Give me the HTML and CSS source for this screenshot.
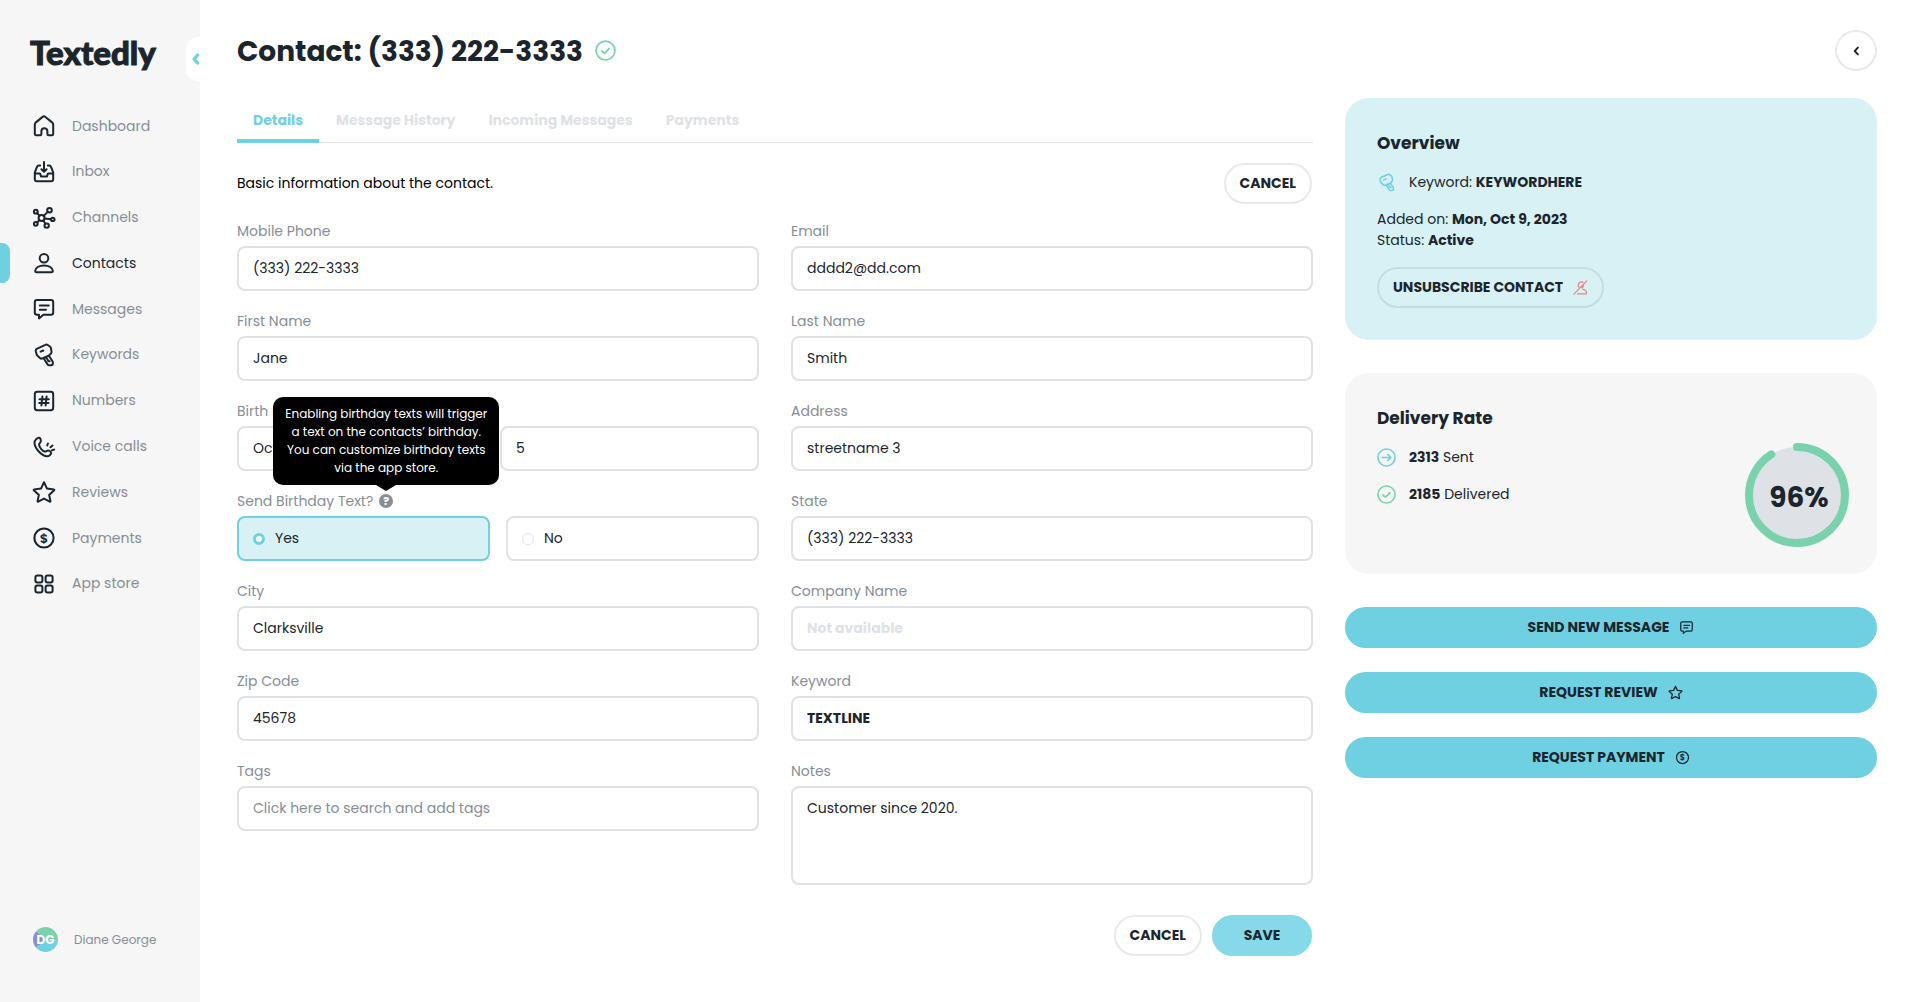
FILE: index.html
```
<!DOCTYPE html>
<html lang="en">
<head>
    <meta charset="UTF-8">
    <meta name="viewport" content="width=device-width, initial-scale=1.0">
    <title>Contact - Textedly</title>
    <link rel="stylesheet" href="styles.css">
</head>
<body>

    <!-- Icon sprite -->
    <svg class="sprite" aria-hidden="true">
        <symbol id="i-home" viewBox="0 0 24 24"><path d="M2.8 20V10.4c0-.7.3-1.3.8-1.8l7-5.7a2.2 2.2 0 0 1 2.8 0l7 5.7c.5.5.8 1.1.8 1.8V20c0 .7-.5 1.2-1.2 1.2h-3.4c-.7 0-1.2-.5-1.2-1.2v-2.8a3 3 0 0 0-6 0V20c0 .7-.5 1.2-1.2 1.2H4c-.7 0-1.2-.5-1.2-1.2z"/></symbol>
        <symbol id="i-inbox" viewBox="0 0 24 24"><path d="M8.2 5.4H6.9c-.8 0-1.5.4-1.8 1.2L2.8 12.4v6.8c0 1.1.9 2 2 2h14.4c1.1 0 2-.9 2-2v-6.8l-2.3-5.8c-.3-.8-1-1.2-1.8-1.2h-1.3M2.8 13.6h4.6c.7 0 1.2.5 1.2 1.2v.6c0 .7.5 1.2 1.2 1.2h4.4c.7 0 1.2-.5 1.2-1.2v-.6c0-.7.5-1.2 1.2-1.2h4.6M12 2v9.4M9.4 9.2l2.6 2.6 2.6-2.6"/></symbol>
        <symbol id="i-channels" viewBox="0 0 24 24"><circle cx="9.6" cy="12" r="3"/><circle cx="3.8" cy="5.7" r="1.9"/><circle cx="17.5" cy="4.2" r="2.3"/><circle cx="20.8" cy="13.4" r="1.7"/><circle cx="14.7" cy="19.6" r="2.2"/><circle cx="3.8" cy="17.8" r="1.9"/><path d="M5.2 7.1l2.2 2.6M15.8 5.9l-4.1 4M12.6 12.5l6.4.7M11.3 14.5l2.1 3.2M7.4 14l-2.2 2.4"/></symbol>
        <symbol id="i-user" viewBox="0 0 24 24"><circle cx="12" cy="7.2" r="4.3"/><path d="M12 14.4c-5 0-8.8 2.5-8.8 5.4 0 .9.6 1.5 1.5 1.5h14.6c.9 0 1.5-.6 1.5-1.5 0-2.9-3.8-5.4-8.8-5.4z"/></symbol>
        <symbol id="i-message" viewBox="0 0 24 24"><path d="M5 3h14c1.2 0 2.2 1 2.2 2.2v10.4c0 1.2-1 2.2-2.2 2.2h-7.6L7 21.4v-3.6H5c-1.2 0-2.2-1-2.2-2.2V5.2C2.8 4 3.8 3 5 3zM7.8 8.6h9M7.8 12.7h6.2"/></symbol>
        <symbol id="i-key" viewBox="0 0 24 24"><path d="M5.2 5.6l8.2-3.8c.8-.4 1.6-.3 2.3.2l2.2 1.5c.6.4 1 1 1.1 1.8l.5 3.3c.1.9-.2 1.7-.9 2.3l-1.7 1.5c-.2.2-.5.4-.8.5l-5.6 2.5c-.9.4-1.9.2-2.6-.4l-2.5-2.4c-.4-.4-.7-.9-.8-1.4L3.8 8.2c-.2-1.1.4-2.2 1.4-2.6zM11.6 15.2l4 6.2c.3.5.8.8 1.4.8h2.2c.9 0 1.6-.7 1.6-1.6v-1.8l-3.9-6M14.6 15l1.4 2.2M16.2 18l1.4.2M8.6 8.7l2.7-1.2"/></symbol>
        <symbol id="i-hash" viewBox="0 0 24 24"><rect x="2.8" y="2.8" width="18.4" height="18.4" rx="2.4"/><path d="M10.4 7.5l-1 9M14.6 7.5l-1 9M7.5 10.2h9.3M7.2 13.9h9.3"/></symbol>
        <symbol id="i-phone" viewBox="0 0 24 24"><path d="M4.2 4.2C5.3 3 6.2 2.4 7.3 2.7c1.3.4 1.8 2.8 1.4 4-.4 1.2-1.6 1.6-1.6 2.9 0 2.4 3.3 6.6 5.7 7 1.3.2 2-1 3.2-1 1.3 0 3 1.2 3.1 2.4.1 1.5-2.2 3.3-4 3.3C9.7 21.3 2.5 13 2.5 7.7c0-1.4.8-2.5 1.7-3.5zM15.3 10.5l.6-2M18.5 12.3l2-1.7M20 15.2l2.2-.6"/></symbol>
        <symbol id="i-star" viewBox="0 0 24 24"><path d="M12 2.2l3 6.4 6.9.8c.4 0 .6.5.3.8l-5.1 4.7 1.4 6.3c.1.4-.3.7-.7.5L12 18.6l-5.8 3.1c-.4.2-.8-.1-.7-.5l1.4-6.3-5.1-4.7c-.3-.3-.1-.8.3-.8l6.9-.8z"/></symbol>
        <symbol id="i-dollar" viewBox="0 0 24 24"><circle cx="12" cy="12" r="9.6"/><text class="icon-sign" x="12" y="16.6" text-anchor="middle">$</text></symbol>
        <symbol id="i-grid" viewBox="0 0 24 24"><rect x="3.4" y="3.4" width="7" height="7" rx="2"/><rect x="13.6" y="3.4" width="7" height="7" rx="2"/><rect x="3.4" y="13.6" width="7" height="7" rx="2"/><rect x="13.6" y="13.6" width="7" height="7" rx="2"/></symbol>
        <symbol id="i-check" viewBox="0 0 24 24"><circle cx="12" cy="12" r="10.8"/><path d="M7.6 12.4l3.2 2.9 5.6-5.7"/></symbol>
        <symbol id="i-arrow" viewBox="0 0 24 24"><circle cx="12" cy="12" r="10.8"/><path d="M6.5 12h11M13.6 8.3l4 3.7-4 3.7"/></symbol>
        <symbol id="i-unsub" viewBox="0 0 24 24"><path d="M16 3.8a5 5 0 1 0-5 9M16.8 7.5a5 5 0 0 1-2.5 4.7M1.5 22.5L22 1.5M15.5 14.5c3.6 1 6.2 3.3 6.2 6.2 0 .9-.6 1.5-1.5 1.5H7.5"/></symbol>
        <symbol id="i-chevron" viewBox="0 0 12 16"><path d="M9 2.5L4 8l5 5.5"/></symbol>
    </svg>

    <div class="app">

        <!-- Sidebar -->
        <aside class="sidebar">
            <a href="#" class="logo">Textedly</a>
            <button class="collapse-btn" aria-label="Collapse menu"><svg><use href="#i-chevron"/></svg></button>

            <nav>
                <ul class="nav-list">
                    <li><a href="#"><svg class="icon"><use href="#i-home"/></svg>Dashboard</a></li>
                    <li><a href="#"><svg class="icon"><use href="#i-inbox"/></svg>Inbox</a></li>
                    <li><a href="#"><svg class="icon"><use href="#i-channels"/></svg>Channels</a></li>
                    <li><a href="#" class="active"><svg class="icon"><use href="#i-user"/></svg>Contacts</a></li>
                    <li><a href="#"><svg class="icon"><use href="#i-message"/></svg>Messages</a></li>
                    <li><a href="#"><svg class="icon"><use href="#i-key"/></svg>Keywords</a></li>
                    <li><a href="#"><svg class="icon"><use href="#i-hash"/></svg>Numbers</a></li>
                    <li><a href="#"><svg class="icon"><use href="#i-phone"/></svg>Voice calls</a></li>
                    <li><a href="#"><svg class="icon"><use href="#i-star"/></svg>Reviews</a></li>
                    <li><a href="#"><svg class="icon"><use href="#i-dollar"/></svg>Payments</a></li>
                    <li><a href="#"><svg class="icon"><use href="#i-grid"/></svg>App store</a></li>
                </ul>
            </nav>

            <a href="#" class="user"><span class="avatar">DG</span>Diane George</a>
        </aside>

        <main class="main">
            <header class="page-header">
                <h1>Contact: (333) 222-3333</h1>
                <svg class="verified"><use href="#i-check"/></svg>
                <button class="back-btn" aria-label="Back"><svg><use href="#i-chevron"/></svg></button>
            </header>

            <div class="columns">
                <section class="details">
                    <nav class="tabs">
                        <a href="#" class="tab active">Details</a>
                        <a href="#" class="tab">Message History</a>
                        <a href="#" class="tab">Incoming Messages</a>
                        <a href="#" class="tab">Payments</a>
                    </nav>

                    <form>
                        <div class="form-header">
                            <p>Basic information about the contact.</p>
                            <button type="button" class="btn btn-outline">CANCEL</button>
                        </div>

                        <div class="form-grid">
                            <div class="field">
                                <label for="mobile">Mobile Phone</label>
                                <input id="mobile" type="text" value="(333) 222-3333">
                            </div>
                            <div class="field">
                                <label for="email">Email</label>
                                <input id="email" type="text" value="dddd2@dd.com">
                            </div>
                            <div class="field">
                                <label for="first">First Name</label>
                                <input id="first" type="text" value="Jane">
                            </div>
                            <div class="field">
                                <label for="last">Last Name</label>
                                <input id="last" type="text" value="Smith">
                            </div>
                            <div class="field">
                                <label for="month">Birth Date</label>
                                <div class="birth-date">
                                    <select id="month"><option>October</option></select>
                                    <select aria-label="Birth day"><option>5</option></select>
                                </div>
                            </div>
                            <div class="field">
                                <label for="address">Address</label>
                                <input id="address" type="text" value="streetname 3">
                            </div>
                            <div class="field" role="radiogroup" aria-labelledby="birthdayText">
                                <div class="label-row">
                                    <span id="birthdayText" class="label">Send Birthday Text?</span>
                                    <span class="help">?
                                        <span class="tooltip" role="tooltip">Enabling birthday texts will trigger<br>a text on the contacts’ birthday.<br>You can customize birthday texts<br>via the app store.</span>
                                    </span>
                                </div>
                                <div class="radio-group">
                                    <label class="radio checked"><input type="radio" name="birthday" checked>Yes</label>
                                    <label class="radio"><input type="radio" name="birthday">No</label>
                                </div>
                            </div>
                            <div class="field">
                                <label for="state">State</label>
                                <input id="state" type="text" value="(333) 222-3333">
                            </div>
                            <div class="field">
                                <label for="city">City</label>
                                <input id="city" type="text" value="Clarksville">
                            </div>
                            <div class="field">
                                <label for="company">Company Name</label>
                                <input id="company" type="text" class="empty" placeholder="Not available">
                            </div>
                            <div class="field">
                                <label for="zip">Zip Code</label>
                                <input id="zip" type="text" value="45678">
                            </div>
                            <div class="field">
                                <label for="keyword">Keyword</label>
                                <input id="keyword" type="text" class="strong" value="TEXTLINE">
                            </div>
                            <div class="field">
                                <label for="tags">Tags</label>
                                <input id="tags" type="text" placeholder="Click here to search and add tags">
                            </div>
                            <div class="field">
                                <label for="notes">Notes</label>
                                <textarea id="notes">Customer since 2020.</textarea>
                            </div>
                        </div>

                        <div class="form-actions">
                            <button type="button" class="btn btn-outline">CANCEL</button>
                            <button type="submit" class="btn btn-save">SAVE</button>
                        </div>
                    </form>
                </section>

                <!-- Right column -->
                <aside class="side">
                    <section class="card overview">
                        <h2>Overview</h2>
                        <p class="row"><svg class="key"><use href="#i-key"/></svg><span>Keyword: <b>KEYWORDHERE</b></span></p>
                        <p>Added on: <b>Mon, Oct 9, 2023</b><br>Status: <b>Active</b></p>
                        <button class="btn btn-unsub">UNSUBSCRIBE CONTACT <svg><use href="#i-unsub"/></svg></button>
                    </section>

                    <section class="card delivery">
                        <div class="stats">
                            <h2>Delivery Rate</h2>
                            <p class="row"><svg class="sent"><use href="#i-arrow"/></svg><span><b>2313</b> Sent</span></p>
                            <p class="row"><svg class="delivered"><use href="#i-check"/></svg><span><b>2185</b> Delivered</span></p>
                        </div>
                        <svg class="ring" viewBox="0 0 104 104">
                            <circle class="ring-bg" cx="52" cy="52" r="48"/>
                            <circle class="ring-value" cx="52" cy="52" r="48" pathLength="100" transform="rotate(-90 52 52)"/>
                            <text x="54" y="64" text-anchor="middle">96%</text>
                        </svg>
                    </section>

                    <div class="actions">
                        <button class="btn btn-primary">SEND NEW MESSAGE <svg><use href="#i-message"/></svg></button>
                        <button class="btn btn-primary">REQUEST REVIEW <svg><use href="#i-star"/></svg></button>
                        <button class="btn btn-primary">REQUEST PAYMENT <svg><use href="#i-dollar"/></svg></button>
                    </div>
                </aside>
            </div>
        </main>
    </div>

</body>
</html>
```
FILE: styles.css
```
/* Basic Reset */
* {
    margin: 0;
    padding: 0;
    box-sizing: border-box;
}

body {
    font-family: Poppins, Inter, sans-serif;
    font-size: 14px;
    line-height: 21px;
    color: #1b252e;
    background: #fff;
}

a {
    color: inherit;
    text-decoration: none;
}

button, input, select, textarea {
    font: inherit;
    color: inherit;
}

button {
    cursor: pointer;
}

svg {
    display: block;
    flex: none;
    fill: none;
    stroke: currentColor;
    stroke-width: 2;
    stroke-linecap: round;
    stroke-linejoin: round;
}

.sprite {
    display: none;
}

.icon-sign {
    fill: currentColor;
    stroke: none;
    font-size: 13px;
    font-weight: 600;
}

.app {
    display: flex;
    min-height: 100vh;
}

/* Sidebar */
.sidebar {
    position: relative;
    flex: none;
    display: flex;
    flex-direction: column;
    width: 200px;
    padding: 31px 0 50px;
    background: #f6f6f6;
}

.logo {
    height: 42px;
    padding-left: 30px;
    font-family: Lato, sans-serif;
    font-size: 33px;
    font-weight: 900;
    line-height: 42px;
    -webkit-text-stroke: 1px #1b252e;
}

.collapse-btn {
    position: absolute;
    top: 37px;
    right: 0;
    display: flex;
    align-items: center;
    justify-content: flex-end;
    width: 14px;
    height: 44px;
    border: none;
    border-radius: 12px 0 0 12px;
    background: #fff;
    color: #6fd0e1;
}

.collapse-btn svg {
    width: 9px;
    height: 16px;
    stroke-width: 4;
}

.nav-list {
    display: flex;
    flex-direction: column;
    justify-content: space-between;
    height: 482px;
    margin-top: 41px;
    list-style: none;
}

.nav-list a {
    position: relative;
    display: flex;
    align-items: center;
    gap: 16px;
    height: 24px;
    padding-left: 32px;
    color: #868e96;
}

.nav-list .icon {
    width: 24px;
    height: 24px;
    color: #1b252e;
}

.nav-list .active {
    color: #1b252e;
}

.nav-list .active::before {
    content: "";
    position: absolute;
    top: -8px;
    left: 0;
    width: 10px;
    height: 40px;
    border-radius: 0 8px 8px 0;
    background: #6fd0e1;
}

.user {
    display: flex;
    align-items: center;
    gap: 16px;
    margin-top: auto;
    padding-left: 33px;
    font-size: 12px;
    color: #868e96;
}

.avatar {
    width: 25px;
    height: 25px;
    border-radius: 50%;
    background: conic-gradient(from -50deg, #79d2ab 0 140deg, #6fd0e1 140deg 280deg, #8592c4 280deg);
    font-weight: 700;
    line-height: 25px;
    text-align: center;
    color: #fff;
}

/* Main */
.main {
    flex: 1;
    min-width: 0;
    padding: 30px 43px 30px 37px;
}

.page-header {
    display: flex;
    align-items: center;
    gap: 12px;
    margin-bottom: 27px;
}

h1 {
    padding-top: 3px;
    font-size: 28px;
    font-weight: 700;
    line-height: 38px;
}

.verified {
    width: 21px;
    height: 21px;
    color: #79d2ab;
}

.back-btn {
    display: flex;
    align-items: center;
    justify-content: center;
    width: 42px;
    height: 41px;
    margin-left: auto;
    border: 2px solid #e9e9e9;
    border-radius: 50%;
    background: #fff;
}

.back-btn svg {
    width: 8px;
    height: 10px;
    stroke-width: 3;
}

.columns {
    display: grid;
    grid-template-columns: minmax(0, 1076fr) minmax(0, 532fr);
    gap: 32px;
    align-items: start;
}

/* Tabs */
.tabs {
    display: flex;
    gap: 1px;
    border-bottom: 1px solid #dee2e6;
}

.tab {
    padding: 12px 16px 8px;
    margin-bottom: -1px;
    border-bottom: 4px solid transparent;
    font-weight: 700;
    color: #dee2e6;
}

.tab.active {
    border-color: #6fd0e1;
    color: #6fd0e1;
}

/* Form */
.form-header {
    display: flex;
    align-items: center;
    justify-content: space-between;
    margin: 20px 1px 16px 0;
    color: #000;
}

.form-grid {
    display: grid;
    grid-template-columns: 1fr 1fr;
    gap: 19px 32px;
}

.field > label,
.label-row {
    display: flex;
    align-items: center;
    gap: 6px;
    height: 22px;
    margin-bottom: 4px;
    color: #868e96;
}

.field input[type="text"],
.field select,
.field textarea,
.radio {
    display: block;
    width: 100%;
    height: 45px;
    padding: 0 14px;
    border: 2px solid #dee2e6;
    border-radius: 8px;
    background: #fff;
}

.field select {
    appearance: none;
}

.field textarea {
    height: 99px;
    padding-top: 10px;
    resize: none;
}

.field input::placeholder {
    color: #868e96;
}

.field .empty::placeholder {
    font-weight: 700;
    color: #dee2e6;
}

.field .strong {
    font-weight: 700;
}

.birth-date {
    display: grid;
    grid-template-columns: 1fr 1fr;
    gap: 4px;
}

.radio-group {
    display: grid;
    grid-template-columns: 1fr 1fr;
    gap: 16px;
}

.field .radio {
    display: flex;
    align-items: center;
    gap: 10px;
}

.field .radio.checked {
    border-color: #6fd0e1;
    background: #d7f1f5;
}

.radio input {
    appearance: none;
    width: 12px;
    height: 12px;
    border: 1px solid #dee2e6;
    border-radius: 50%;
    background: #fff;
}

.radio input:checked {
    border: 3px solid #6fd0e1;
}

/* Help tooltip */
.help {
    position: relative;
    width: 14px;
    height: 14px;
    border-radius: 50%;
    background: #868e96;
    font-size: 11px;
    font-weight: 700;
    line-height: 14px;
    text-align: center;
    color: #fff;
}

.tooltip {
    position: absolute;
    bottom: 23px;
    left: 50%;
    z-index: 10;
    width: 226px;
    padding: 8px 0;
    border-radius: 10px;
    background: #000;
    font-size: 12px;
    font-weight: 400;
    line-height: 18px;
    white-space: nowrap;
    transform: translateX(-50%);
}

.tooltip::after {
    content: "";
    position: absolute;
    top: 100%;
    left: 50%;
    border: 10px solid transparent;
    border-top: 6px solid #000;
    border-bottom: none;
    transform: translateX(-50%);
}

/* Buttons */
.btn {
    display: flex;
    align-items: center;
    justify-content: center;
    gap: 10px;
    height: 41px;
    padding: 0 14px;
    border: 2px solid transparent;
    border-radius: 21px;
    background: none;
    font-weight: 700;
    color: #1b252e;
}

.btn svg {
    width: 15px;
    height: 15px;
}

.btn-outline {
    border-color: #e9e9e9;
    background: #fff;
}

.btn-save {
    width: 100px;
    background-color: #86d9e8;
    border-color: #86d9e8;
}

.btn-primary {
    width: 100%;
    border-color: #6fd0e1;
    background: #6fd0e1;
}

.btn-unsub {
    border-color: #c5dde1;
}

.btn-unsub svg {
    color: #f08080;
}

.form-actions {
    display: flex;
    justify-content: flex-end;
    gap: 10px;
    margin: 30px 1px 0 0;
}

/* Cards */
.side {
    display: flex;
    flex-direction: column;
    gap: 33px;
}

.card {
    padding: 32px;
    border-radius: 24px;
    background: #f6f6f6;
}

.card h2 {
    margin-bottom: 16px;
    font-size: 17px;
    line-height: 26px;
}

.card p {
    margin-bottom: 16px;
}

.overview {
    background: #d7f1f5;
}

.row {
    display: flex;
    align-items: center;
    gap: 13px;
}

.row svg {
    width: 19px;
    height: 19px;
}

.key, .sent {
    color: #6fd0e1;
}

.delivered {
    color: #79d2ab;
}

.delivery {
    display: flex;
    align-items: flex-end;
    justify-content: space-between;
    min-height: 201px;
    padding: 32px 28px 27px 32px;
}

.stats {
    align-self: flex-start;
}

.ring {
    width: 104px;
    height: 104px;
}

.ring-bg {
    fill: #dee2e6;
    stroke: none;
}

.ring-value {
    stroke: #79d2ab;
    stroke-width: 8;
    stroke-dasharray: 91 100;
}

.ring text {
    fill: #1b252e;
    stroke: none;
    font-size: 28px;
    font-weight: 700;
}

.actions {
    display: flex;
    flex-direction: column;
    gap: 24px;
}

/* Responsive Design */
@media (max-width: 1100px) {
    .columns {
        grid-template-columns: 1fr;
    }
}
```
